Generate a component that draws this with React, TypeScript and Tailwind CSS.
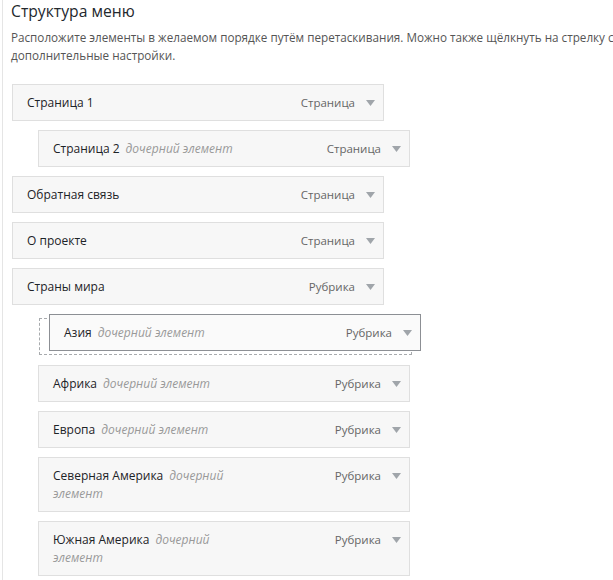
import React from "react";

type Item = {
  title: string;
  type: string;
  child?: boolean;
};

const topItems: Item[] = [
  { title: "Страница 1", type: "Страница" },
  { title: "Страница 2", type: "Страница", child: true },
  { title: "Обратная связь", type: "Страница" },
  { title: "О проекте", type: "Страница" },
  { title: "Страны мира", type: "Рубрика" },
];

const bottomItems: Item[] = [
  { title: "Африка", type: "Рубрика", child: true },
  { title: "Европа", type: "Рубрика", child: true },
  { title: "Северная Америка", type: "Рубрика", child: true },
  { title: "Южная Америка", type: "Рубрика", child: true },
];

function Arrow() {
  return (
    <svg width="9" height="6" viewBox="0 0 9 6" className="mt-[6px] shrink-0">
      <path d="M0 0 L9 0 L4.5 6 Z" fill="#a0a5aa" />
    </svg>
  );
}

function Bar({ item, dragging }: { item: Item; dragging?: boolean }) {
  return (
    <div
      className={`flex w-[372px] items-start justify-between border pl-[14px] pr-[8px] pt-[9px] pb-[8px] text-[12px] leading-[18px] ${
        dragging ? "border-[#8c8f94] bg-[#fafafa]" : "border-[#dfdfdf] bg-[#f7f7f7]"
      }`}
    >
      <div className="max-w-[200px] text-[#1d2327]">
        <span className="font-medium">{item.title}</span>
        {item.child && <span className="ml-[6px] italic text-[#999]">дочерний элемент</span>}
      </div>
      <div className="flex items-start gap-[11px]">
        <span className="text-[11.5px] text-[#666]">{item.type}</span>
        <Arrow />
      </div>
    </div>
  );
}

export default function App() {
  return (
    <div className="min-h-[580px] w-full overflow-hidden bg-white" style={{ fontFamily: '"Open Sans", "Noto Sans", sans-serif' }}>
      <div className="ml-[2px] min-h-[580px] border-l border-[#e5e5e5] pl-[8px] pb-4">
        <h3 className="text-[15.7px] leading-[22px] font-normal text-[#23282d]">Структура меню</h3>
        <p className="mt-[6px] whitespace-nowrap text-[11.7px] leading-[18px] text-[#555]">
          Расположите элементы в желаемом порядке путём перетаскивания. Можно также щёлкнуть на стрелку справа от элемента, чтобы открыть
          <br />
          дополнительные настройки.
        </p>

        <div className="mt-[20px] flex flex-col">
          {topItems.map((item) => (
            <div key={item.title} className={`mb-[9px] ${item.child ? "pl-[27px]" : "pl-[1px]"}`}>
              <Bar item={item} />
            </div>
          ))}

          {/* placeholder for the item being dragged */}
          <div className="relative ml-[28px] mt-[4px] h-[37px] w-[373px] border border-dashed border-[#a7aaad]">
            <div className="absolute left-[9px] top-[-5px]">
              <Bar item={{ title: "Азия", type: "Рубрика", child: true }} dragging />
            </div>
          </div>

          <div className="mt-[10px] flex flex-col">
            {bottomItems.map((item) => (
              <div key={item.title} className="mb-[9px] pl-[27px]">
                <Bar item={item} />
              </div>
            ))}
          </div>
        </div>
      </div>
    </div>
  );
}
